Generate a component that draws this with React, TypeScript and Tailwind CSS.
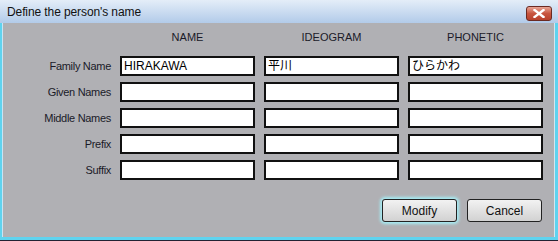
const ROWS = ['Family Name', 'Given Names', 'Middle Names', 'Prefix', 'Suffix'];

const VALUES: Record<string, string[]> = {
  'Family Name': ['HIRAKAWA', '平川', 'ひらかわ'],
};

function Field({ value }: { value?: string }) {
  return (
    <div className="h-[20px] w-[135px] border-2 border-[#111] bg-white px-[2px] text-[12px] leading-[16px] text-black whitespace-nowrap overflow-hidden">
      {value}
    </div>
  );
}

function CloseButton() {
  return (
    <div className="mt-[3px] flex h-[15px] w-[26px] items-center justify-center rounded-[3px] border border-[#6b2a22] bg-gradient-to-b from-[#e8a596] via-[#c8553f] to-[#b8412c]">
      <svg width="12" height="9" viewBox="0 0 12 9">
        <path d="M1.5 1 L10.5 8 M10.5 1 L1.5 8" stroke="#fff" strokeWidth="2.4" strokeLinecap="square" />
      </svg>
    </div>
  );
}

export default function App() {
  return (
    <div
      className="flex h-[241px] w-[558px] flex-col overflow-hidden border-b border-[#223] bg-[#5fd3ef]"
      style={{ fontFamily: '"Liberation Sans", "Noto Sans CJK JP", sans-serif' }}
    >
      {/* Title bar */}
      <div className="flex h-[23px] shrink-0 items-center justify-between bg-gradient-to-b from-[#e4edf8] to-[#b2cbe9] pl-[7px] pr-[6px]">
        <span className="text-[12px] tracking-[-0.1px] text-[#111]">Define the person's name</span>
        <CloseButton />
      </div>

      {/* Body */}
      <div className="mb-[3px] ml-[2px] mr-[3px] flex flex-1 flex-col border-l border-r border-l-[#c8e4f4] border-r-[#d6e6ee] bg-[#b0b0b4] text-[11px] leading-[16px] text-[#1a1a28]">
        <div className="ml-[117px] mt-[6px] flex gap-[9px]">
          <div className="w-[135px] text-center">NAME</div>
          <div className="w-[135px] text-center">IDEOGRAM</div>
          <div className="w-[135px] text-center">PHONETIC</div>
        </div>

        <div className="mt-[11px] flex flex-col gap-[6px]">
          {ROWS.map((row) => (
            <div key={row} className="flex items-center">
              <div className="w-[108px] text-right tracking-[-0.3px]">{row}</div>
              <div className="ml-[9px] flex gap-[9px]">
                {[0, 1, 2].map((i) => (
                  <Field key={i} value={VALUES[row]?.[i]} />
                ))}
              </div>
            </div>
          ))}
        </div>

        <div className="mt-[19px] flex justify-end gap-[10px] pr-[12px]">
          <button className="h-[23px] w-[75px] rounded-[3px] border border-[#222] bg-gradient-to-b from-[#f2f2f2] to-[#d2d2d2] text-[12px] text-[#111] shadow-[0_0_3px_2px_#a6ecf4]">
            Modify
          </button>
          <button className="h-[23px] w-[75px] rounded-[3px] border border-[#222] bg-gradient-to-b from-[#f2f2f2] to-[#d2d2d2] text-[12px] text-[#111]">
            Cancel
          </button>
        </div>
      </div>
    </div>
  );
}
